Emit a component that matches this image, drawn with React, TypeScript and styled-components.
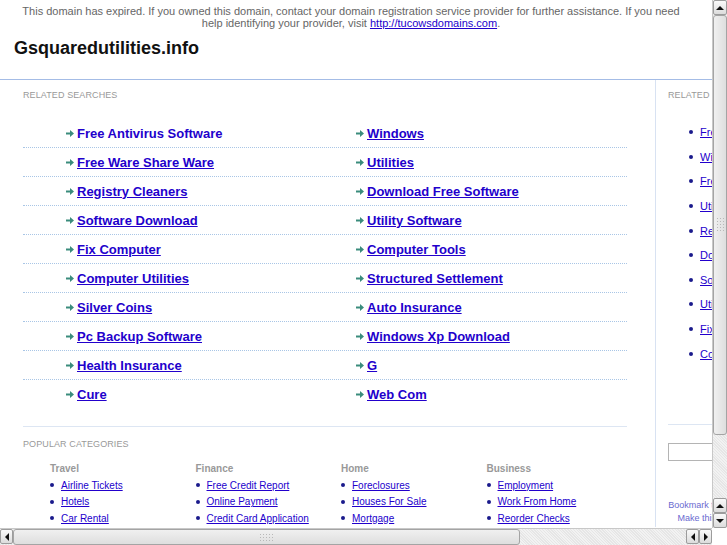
import React, { FC } from 'react';
import styled, { createGlobalStyle } from 'styled-components';

const GlobalStyle = createGlobalStyle`
  html, body {
    margin: 0;
    padding: 0;
    overflow: hidden;
    background: #fff;
  }
`;

const related = [
  ['Free Antivirus Software', 'Windows'],
  ['Free Ware Share Ware', 'Utilities'],
  ['Registry Cleaners', 'Download Free Software'],
  ['Software Download', 'Utility Software'],
  ['Fix Computer', 'Computer Tools'],
  ['Computer Utilities', 'Structured Settlement'],
  ['Silver Coins', 'Auto Insurance'],
  ['Pc Backup Software', 'Windows Xp Download'],
  ['Health Insurance', 'G'],
  ['Cure', 'Web Com'],
];

const sideLinks = [
  'Free Antivirus Software',
  'Windows',
  'Free Ware Share Ware',
  'Utilities',
  'Registry Cleaners',
  'Download Free Software',
  'Software Download',
  'Utility Software',
  'Fix Computer',
  'Computer Tools',
];

const categories = [
  { title: 'Travel', links: ['Airline Tickets', 'Hotels', 'Car Rental'] },
  { title: 'Finance', links: ['Free Credit Report', 'Online Payment', 'Credit Card Application'] },
  { title: 'Home', links: ['Foreclosures', 'Houses For Sale', 'Mortgage'] },
  { title: 'Business', links: ['Employment', 'Work From Home', 'Reorder Checks'] },
];

const LINK = '#2200cc';
const FONT = `'Liberation Sans', Arial, sans-serif`;

const Screen = styled.div`
  display: grid;
  grid-template-columns: 712px 15px;
  grid-template-rows: 528px 17px;
  width: 727px;
  height: 545px;
  font-family: ${FONT};
`;

const Viewport = styled.div`
  overflow: hidden;
  background: #fff;
`;

const Page = styled.div`
  width: 860px;
`;

const Notice = styled.div`
  width: 672px;
  padding: 5px 0 0 15px;
  font-size: 11px;
  line-height: 12px;
  color: #666;
  text-align: center;

  a {
    color: ${LINK};
    text-decoration: underline;
  }
`;

const Header = styled.div`
  padding: 8px 14px 20px;
  border-bottom: 1px solid #a4bce6;
`;

const Title = styled.h1`
  margin: 0;
  font-size: 18px;
  line-height: 22px;
  font-weight: bold;
  color: #111;
`;

const Main = styled.div`
  display: flex;
`;

const LeftPanel = styled.div`
  width: 604px;
  padding: 10px 28px 0 23px;
  border-right: 1px solid #d8e2f2;
`;

const RightPanel = styled.div`
  width: 188px;
  padding: 10px 0 0 12px;
`;

const SectionLabel = styled.div<{ gap: number; top?: number }>`
  font-size: 9px;
  line-height: 11px;
  letter-spacing: 0.1px;
  color: #999;
  text-transform: uppercase;
  margin-top: ${({ top }) => top || 0}px;
  margin-bottom: ${({ gap }) => gap}px;
`;

const SearchList = styled.div`
  display: flex;
  flex-direction: column;
`;

const SearchRow = styled.div`
  display: grid;
  grid-template-columns: 290px 290px;
  height: 28px;
  align-items: center;

  &:not(:last-child) {
    border-bottom: 1px dotted #a9c6e6;
  }
`;

const SearchCell = styled.div`
  display: flex;
  align-items: center;
  padding-left: 43px;
  gap: 3px;
`;

const SearchLink = styled.a<{ plain?: boolean }>`
  font-size: 13px;
  font-weight: bold;
  color: ${LINK};
  text-decoration: ${({ plain }) => (plain ? 'none' : 'underline')};
  cursor: pointer;
`;

const Divider = styled.div<{ top: number }>`
  margin-top: ${({ top }) => top}px;
  border-top: 1px solid #dde6f3;
`;

const CategoryGrid = styled.div`
  display: grid;
  grid-template-columns: repeat(4, 145.5px);
  padding-left: 27px;
`;

const CategoryTitle = styled.div`
  font-size: 10px;
  line-height: 12px;
  font-weight: bold;
  color: #999;
  margin-bottom: 2px;
`;

const BulletList = styled.ul<{ rowHeight: number; indent: number }>`
  list-style: none;
  margin: 0;
  padding: 0 0 0 ${({ indent }) => indent}px;

  li {
    display: flex;
    align-items: center;
    height: ${({ rowHeight }) => rowHeight}px;
    white-space: nowrap;
  }

  li::before {
    content: '';
    width: 4px;
    height: 4px;
    border-radius: 2px;
    background: #1a1a8c;
    margin-right: 7px;
    flex: none;
  }
`;

const SmallLink = styled.a<{ size: number }>`
  font-size: ${({ size }) => size}px;
  color: ${LINK};
  text-decoration: underline;
  cursor: pointer;
`;

const SearchInput = styled.input`
  display: block;
  margin-top: 18px;
  width: 150px;
  height: 16px;
  padding: 0;
  border: 1px solid #b4b4b4;
`;

const Bookmark = styled.div`
  width: 80px;
  margin-top: 38px;
  font-size: 9px;
  line-height: 13px;
  color: #6a6ad0;
  text-align: center;
  white-space: nowrap;
`;

const VScroll = styled.div`
  display: flex;
  flex-direction: column;
  background: repeating-linear-gradient(45deg, #e6e6e6 0 1px, #f2f2f2 1px 2px);
  border-left: 1px solid #c8c8c8;
`;

const HScroll = styled.div`
  display: flex;
  background: repeating-linear-gradient(45deg, #e6e6e6 0 1px, #f2f2f2 1px 2px);
  border-top: 1px solid #c8c8c8;
`;

const Corner = styled.div`
  background: #fff;
`;

const ScrollButton = styled.div<{ vertical?: boolean }>`
  display: flex;
  align-items: center;
  justify-content: center;
  flex: none;
  width: ${({ vertical }) => (vertical ? '14px' : '13px')};
  height: 15px;
  box-sizing: border-box;
  border: 1px solid #9c9c9c;
  border-radius: 2px;
  background: linear-gradient(#fafafa, #dcdcdc);
`;

const Thumb = styled.div<{ size: number; vertical?: boolean }>`
  display: flex;
  align-items: center;
  justify-content: center;
  flex: none;
  box-sizing: border-box;
  ${({ vertical, size }) => (vertical ? `height: ${size}px;` : `width: ${size}px;`)}
  border: 1px solid #a4a4a4;
  border-radius: 3px;
  background: ${({ vertical }) =>
    vertical ? 'linear-gradient(90deg, #f0f0f0, #dedede)' : 'linear-gradient(#f0f0f0, #dedede)'};
`;

const Grip = styled.div<{ vertical?: boolean }>`
  width: ${({ vertical }) => (vertical ? '8px' : '16px')};
  height: ${({ vertical }) => (vertical ? '16px' : '8px')};
  background-image: radial-gradient(#b8b8b8 0.8px, transparent 1px);
  background-size: 3px 3px;
`;

const Spacer = styled.div`
  flex: 1;
`;

const Arrow: FC<{ dir: 'up' | 'down' | 'left' | 'right' }> = ({ dir }) => {
  const points = {
    up: '0,6 4,2 8,6',
    down: '0,2 4,6 8,2',
    left: '6,0 2,4 6,8',
    right: '2,0 6,4 2,8',
  }[dir];
  return (
    <svg width="8" height="8" viewBox="0 0 8 8">
      <polygon points={points} fill="#111" />
    </svg>
  );
};

const GoArrow = () => (
  <svg width="8" height="7" viewBox="0 0 8 7">
    <path d="M0 2.5h4V0l4 3.5L4 7V4.5H0z" fill="#3a8c7c" />
  </svg>
);

const App: FC = () => {
  return (
    <>
      <GlobalStyle />
      <Screen>
        <Viewport>
          <Page>
            <Notice>
              This domain has expired. If you owned this domain, contact your domain registration service provider
              for further assistance. If you need help identifying your provider, visit{' '}
              <a href="#">http://tucowsdomains.com</a>.
            </Notice>
            <Header>
              <Title>Gsquaredutilities.info</Title>
            </Header>
            <Main>
              <LeftPanel>
                <SectionLabel gap={18}>Related Searches</SectionLabel>
                <SearchList>
                  {related.map((row, i) => (
                    <SearchRow key={i}>
                      {row.map((label, j) => (
                        <SearchCell key={label}>
                          <GoArrow />
                          <SearchLink plain={i === 0 && j === 0}>{label}</SearchLink>
                        </SearchCell>
                      ))}
                    </SearchRow>
                  ))}
                </SearchList>
                <Divider top={18} />
                <SectionLabel gap={13} top={12}>Popular Categories</SectionLabel>
                <CategoryGrid>
                  {categories.map((cat) => (
                    <div key={cat.title}>
                      <CategoryTitle>{cat.title}</CategoryTitle>
                      <BulletList rowHeight={16.5} indent={0}>
                        {cat.links.map((l) => (
                          <li key={l}>
                            <SmallLink size={10}>{l}</SmallLink>
                          </li>
                        ))}
                      </BulletList>
                    </div>
                  ))}
                </CategoryGrid>
              </LeftPanel>
              <RightPanel>
                <SectionLabel gap={19}>Related Searches</SectionLabel>
                <BulletList rowHeight={24.6} indent={21}>
                  {sideLinks.map((l) => (
                    <li key={l}>
                      <SmallLink size={11}>{l}</SmallLink>
                    </li>
                  ))}
                </BulletList>
                <Divider top={58} />
                <SearchInput type="text" />
                <Bookmark>
                  Bookmark this page
                  <br />
                  Make this page
                </Bookmark>
              </RightPanel>
            </Main>
          </Page>
        </Viewport>
        <VScroll>
          <ScrollButton vertical>
            <Arrow dir="up" />
          </ScrollButton>
          <Thumb vertical size={420}>
            <Grip vertical />
          </Thumb>
          <Spacer />
          <ScrollButton vertical>
            <Arrow dir="up" />
          </ScrollButton>
          <ScrollButton vertical>
            <Arrow dir="down" />
          </ScrollButton>
        </VScroll>
        <HScroll>
          <ScrollButton>
            <Arrow dir="left" />
          </ScrollButton>
          <Thumb size={507}>
            <Grip />
          </Thumb>
          <Spacer />
          <ScrollButton>
            <Arrow dir="left" />
          </ScrollButton>
          <ScrollButton>
            <Arrow dir="right" />
          </ScrollButton>
        </HScroll>
        <Corner />
      </Screen>
    </>
  );
};

export default App;
